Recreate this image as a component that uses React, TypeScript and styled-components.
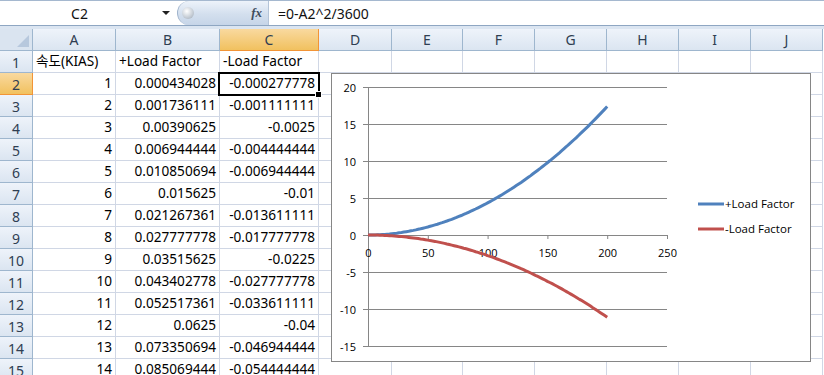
import { Fragment } from "react";
import styled, { createGlobalStyle } from "styled-components";

const GlobalStyle = createGlobalStyle`
  html, body {
    margin: 0;
    padding: 0;
    background: #ffffff;
    overflow: hidden;
  }
  body {
    font-family: "Noto Sans", "Noto Sans CJK KR", sans-serif;
  }
`;

const COLS = [83, 104, 99, 73, 71, 72, 72, 72, 72, 72];
const LETTERS = ["A", "B", "C", "D", "E", "F", "G", "H", "I", "J"];

const rows: [string, string, string][] = [
  ["1", "0.000434028", "-0.000277778"],
  ["2", "0.001736111", "-0.001111111"],
  ["3", "0.00390625", "-0.0025"],
  ["4", "0.006944444", "-0.004444444"],
  ["5", "0.010850694", "-0.006944444"],
  ["6", "0.015625", "-0.01"],
  ["7", "0.021267361", "-0.013611111"],
  ["8", "0.027777778", "-0.017777778"],
  ["9", "0.03515625", "-0.0225"],
  ["10", "0.043402778", "-0.027777778"],
  ["11", "0.052517361", "-0.033611111"],
  ["12", "0.0625", "-0.04"],
  ["13", "0.073350694", "-0.046944444"],
  ["14", "0.085069444", "-0.054444444"],
];

const Page = styled.div`
  width: 824px;
  height: 375px;
  overflow: hidden;
  background: #dbe5f1;
`;

const FormulaBar = styled.div`
  display: flex;
  align-items: stretch;
  height: 24px;
  border-top: 1px solid #a5b8cf;
  border-bottom: 1px solid #8ea6c2;
  background: #ffffff;
  margin-bottom: 3px;
`;

const NameBox = styled.div`
  position: relative;
  width: 177px;
  display: flex;
  align-items: center;
  justify-content: center;
  font-size: 14px;
  color: #111;
  padding-right: 18px;
  box-sizing: border-box;
`;

const DropArrow = styled.span`
  position: absolute;
  right: 7px;
  top: 10px;
  width: 0;
  height: 0;
  border-left: 4px solid transparent;
  border-right: 4px solid transparent;
  border-top: 4px solid #222;
`;

const Pill = styled.div`
  width: 92px;
  display: flex;
  align-items: center;
  justify-content: space-between;
  padding: 0 6px 0 4px;
  box-sizing: border-box;
  border-radius: 12px 0 0 12px;
  border-left: 1px solid #9fb3cc;
  border-right: 1px solid #b4c4d8;
  background: linear-gradient(#edf3fa, #d3dfee 55%, #c6d5e8);
`;

const Knob = styled.span`
  width: 12px;
  height: 12px;
  border-radius: 50%;
  background: radial-gradient(circle at 40% 35%, #ffffff, #c9d0d8 55%, #9aa5b1);
`;

const Fx = styled.span`
  font-family: "Liberation Serif", serif;
  font-style: italic;
  font-weight: bold;
  font-size: 13px;
  color: #3f4c5c;
`;

const Formula = styled.div`
  flex: 1;
  display: flex;
  align-items: center;
  padding-left: 9px;
  font-size: 14px;
  color: #111;
`;

const SheetArea = styled.div`
  position: relative;
`;

const Grid = styled.div`
  display: grid;
  grid-template-columns: 33px ${COLS.map((c) => c + "px").join(" ")};
  grid-auto-rows: 22px;
  background: #ffffff;
`;

const Corner = styled.div`
  position: relative;
  box-sizing: border-box;
  border-right: 1px solid #9eb6ce;
  border-bottom: 1px solid #9eb6ce;
  background: #dae4f0;
  &::after {
    content: "";
    position: absolute;
    right: 3px;
    bottom: 3px;
    width: 0;
    height: 0;
    border-left: 12px solid transparent;
    border-bottom: 12px solid #b7c8dd;
  }
`;

const Header = styled.div<{ $active?: boolean }>`
  box-sizing: border-box;
  display: flex;
  align-items: center;
  justify-content: center;
  font-size: 14px;
  color: #2f3e52;
  border-right: 1px solid ${(p) => (p.$active ? "#f29436" : "#9eb6ce")};
  border-bottom: 1px solid ${(p) => (p.$active ? "#f29436" : "#9eb6ce")};
  background: ${(p) =>
    p.$active
      ? "linear-gradient(#f9d99f, #f1c15f)"
      : "linear-gradient(#eef3fa, #dbe5f1)"};
`;

const RowHead = styled(Header)`
  padding-top: 1px;
`;

const Cell = styled.div<{ $left?: boolean }>`
  box-sizing: border-box;
  display: flex;
  align-items: flex-end;
  justify-content: ${(p) => (p.$left ? "flex-start" : "flex-end")};
  padding: 0 3px 1px 3px;
  font-size: 13.6px;
  line-height: 20px;
  color: #000;
  white-space: nowrap;
  overflow: visible;
  border-right: 1px solid #d0d7e5;
  border-bottom: 1px solid #d0d7e5;
`;

const Selection = styled.div`
  position: absolute;
  left: 218px;
  top: 43px;
  width: 102px;
  height: 24px;
  border: 2px solid #000;
  box-sizing: border-box;
  pointer-events: none;
  &::after {
    content: "";
    position: absolute;
    right: -4px;
    bottom: -4px;
    width: 5px;
    height: 5px;
    background: #000;
    border: 1px solid #fff;
  }
`;

const ChartBox = styled.div`
  position: absolute;
  left: 331px;
  top: 44px;
  width: 480px;
  height: 289px;
  box-sizing: border-box;
  border: 1px solid #868686;
  background: #ffffff;
`;

const ChartSvg = styled.svg`
  display: block;
  font-family: "Open Sans", "Noto Sans", sans-serif;
  font-size: 11px;
`;

const LegendText = styled.text`
  font-size: 11.5px;
`;

const X0 = 37;
const Y0 = 162;
const XS = 299 / 250;
const YS = 37 / 5;

function curve(k: number) {
  const pts: string[] = [];
  for (let x = 0; x <= 200; x += 2) {
    const y = (x * x) / k;
    pts.push(`${(X0 + x * XS).toFixed(1)},${(Y0 - y * YS).toFixed(1)}`);
  }
  return pts.join(" ");
}

function Chart() {
  const yTicks = [20, 15, 10, 5, 0, -5, -10, -15];
  const xTicks = [0, 50, 100, 150, 200, 250];
  return (
    <ChartBox>
      <ChartSvg width={478} height={287} viewBox="1 1 478 287">
        {yTicks.map((v) => {
          const y = Y0 - v * YS + 0.5;
          return (
            <g key={v}>
              <line x1={X0 - 5} x2={X0 + 250 * XS} y1={y} y2={y} stroke="#868686" strokeWidth={1} />
              <text x={25} y={y + 4} textAnchor="end" fill="#000">
                {v}
              </text>
            </g>
          );
        })}
        <line x1={X0 + 0.5} x2={X0 + 0.5} y1={Y0 - 20 * YS} y2={Y0 + 15 * YS} stroke="#868686" />
        {xTicks.map((v) => {
          const x = X0 + v * XS + 0.5;
          return (
            <g key={v}>
              <line x1={x} x2={x} y1={Y0} y2={Y0 + 4} stroke="#868686" />
              <text x={x} y={Y0 + 22} textAnchor="middle" fill="#000">
                {v}
              </text>
            </g>
          );
        })}
        <polyline points={curve(2304)} fill="none" stroke="#4f81bd" strokeWidth={3} />
        <polyline points={curve(-3600)} fill="none" stroke="#c0504d" strokeWidth={3} />
        <line x1={367} x2={393} y1={131} y2={131} stroke="#4f81bd" strokeWidth={3} />
        <LegendText x={394} y={135} fill="#000">+Load Factor</LegendText>
        <line x1={367} x2={393} y1={156} y2={156} stroke="#c0504d" strokeWidth={3} />
        <LegendText x={394} y={160} fill="#000">-Load Factor</LegendText>
      </ChartSvg>
    </ChartBox>
  );
}

export default function App() {
  return (
    <Page>
      <GlobalStyle />
      <FormulaBar>
        <NameBox>
          C2
          <DropArrow />
        </NameBox>
        <Pill>
          <Knob />
          <Fx>fx</Fx>
        </Pill>
        <Formula>=0-A2^2/3600</Formula>
      </FormulaBar>
      <SheetArea>
        <Grid>
          <Corner />
          {LETTERS.map((l) => (
            <Header key={l} $active={l === "C"}>
              {l}
            </Header>
          ))}
          <RowHead>1</RowHead>
          <Cell $left>속도(KIAS)</Cell>
          <Cell $left>+Load Factor</Cell>
          <Cell $left>-Load Factor</Cell>
          {LETTERS.slice(3).map((l) => (
            <Cell key={l} />
          ))}
          {rows.map((r, i) => (
            <Fragment key={i}>
              <RowHead $active={i === 0}>{i + 2}</RowHead>
              <Cell>{r[0]}</Cell>
              <Cell>{r[1]}</Cell>
              <Cell>{r[2]}</Cell>
              {LETTERS.slice(3).map((l) => (
                <Cell key={l} />
              ))}
            </Fragment>
          ))}
        </Grid>
        <Selection />
        <Chart />
      </SheetArea>
    </Page>
  );
}
